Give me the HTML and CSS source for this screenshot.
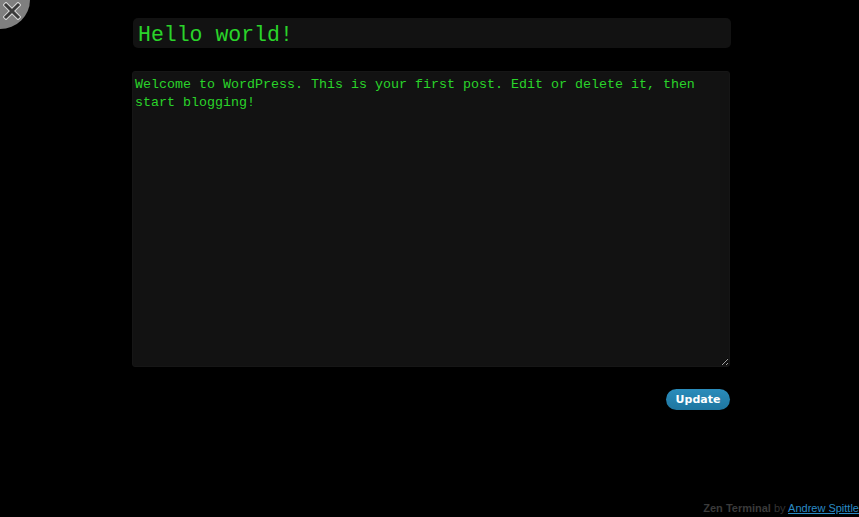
FILE: index.html
```html
<!DOCTYPE html>
<html>
<head>
<meta charset="utf-8">
<link rel="stylesheet" href="styles.css">
</head>
<body>
<a class="close" href="#" aria-label="Close">
  <svg width="18" height="18" viewBox="0 0 18 18">
    <path d="M3 3 L15 15 M15 3 L3 15" stroke="#d8d8d8" stroke-width="5" stroke-linecap="square"/>
    <path d="M3 3 L15 15 M15 3 L3 15" stroke="#3a3a3a" stroke-width="3" stroke-linecap="square"/>
  </svg>
</a>
<main class="editor">
  <div class="title">Hello world!</div>
  <textarea class="content" readonly>Welcome to WordPress. This is your first post. Edit or delete it, then start blogging!</textarea>
  <div class="actions"><button class="update">Update</button></div>
</main>
<footer class="credit"><b>Zen Terminal</b> by <a href="#">Andrew Spittle</a></footer>
</body>
</html>
```
FILE: styles.css
```css
html, body {
  margin: 0;
  padding: 0;
  background: #000;
  height: 100%;
}
body {
  position: relative;
  overflow: hidden;
}
.close {
  position: absolute;
  left: 0;
  top: 0;
  width: 30px;
  height: 29px;
  background: #7f7f7f;
  border-bottom-right-radius: 30px 29px;
  display: block;
}
.close svg {
  position: absolute;
  left: 3px;
  top: 2px;
}
.editor {
  margin-left: 132px;
  width: 599px;
  padding-top: 18px;
  display: flex;
  flex-direction: column;
}
.title {
  margin-left: 1px;
  height: 30px;
  box-sizing: border-box;
  background: #121212;
  border-radius: 5px;
  color: #2ad42a;
  font-family: "Liberation Mono", monospace;
  font-size: 21.5px;
  line-height: 30px;
  padding: 2px 0 0 5px;
}
.content {
  margin-top: 23px;
  width: 598px;
  height: 296px;
  box-sizing: border-box;
  background: #121212;
  border: 1px solid #161616;
  border-radius: 3px;
  color: #2ad42a;
  font-family: "Liberation Mono", monospace;
  font-size: 13.33px;
  line-height: 18px;
  padding: 4px 2px 2px;
  outline: none;
  resize: vertical;
  display: block;
}
.actions {
  width: 598px;
  display: flex;
  justify-content: flex-end;
  margin-top: 22px;
}
.update {
  height: 21px;
  width: 64px;
  border: 0;
  border-radius: 11px;
  background: linear-gradient(#2a8cbb, #1f76a0);
  color: #fff;
  font-family: "DejaVu Sans", sans-serif;
  font-weight: bold;
  font-size: 11px;
  padding: 1px 0 0;
  line-height: 20px;
}
.credit {
  position: absolute;
  right: 0;
  bottom: 3px;
  font-family: "Liberation Sans", Arial, sans-serif;
  font-size: 11px;
  color: #333;
  white-space: nowrap;
}
.credit b {
  color: #3a3a3a;
}
.credit a {
  color: #2a8ac4;
}
```
